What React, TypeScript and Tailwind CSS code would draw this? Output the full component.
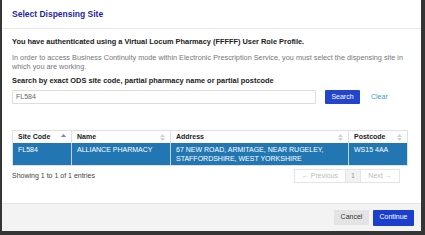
import React from "react";

function SortIcon({ active }: { active?: boolean }) {
  return (
    <svg width="5" height="7" viewBox="0 0 5 7" className="shrink-0">
      <path d="M2.5 0 L5 3 L0 3 Z" fill={active ? "#7777cc" : "#d0d0d0"} />
      {!active && <path d="M2.5 7 L5 4 L0 4 Z" fill="#d0d0d0" />}
    </svg>
  );
}

export default function App() {
  return (
    <div
      className="w-[425px] h-[235px] bg-[#353535] overflow-hidden"
      style={{ fontFamily: '"Liberation Sans", Arial, sans-serif' }}
    >
      <div className="ml-[2px] w-[419px] h-[231px] bg-white flex flex-col">
        <div className="h-[29px] shrink-0 border-b border-[#e8e8e8] flex items-center px-[10px]">
          <span className="text-[8.5px] font-bold text-[#1f1fa8]">Select Dispensing Site</span>
        </div>
        <div className="px-[10px] pt-[8px] flex-1">
          <div className="text-[7.4px] font-bold text-[#222] leading-[10px]">
            You have authenticated using a Virtual Locum Pharmacy (FFFFF) User Role Profile.
          </div>
          <div className="mt-[6px] text-[7.3px] text-[#777] leading-[9px]">
            In order to access Business Continuity mode within Electronic Prescription Service, you must select the dispensing site in which you are working.
          </div>
          <div className="mt-[5px] text-[7.4px] font-bold text-[#222] leading-[10px]">
            Search by exact ODS site code, partial pharmacy name or partial postcode
          </div>
          <div className="mt-[4px] flex items-center">
            <div className="w-[304px] h-[14px] border border-[#dddddd] rounded-[1px] flex items-center px-[3px] text-[7px] text-[#666]">
              FL584
            </div>
            <div className="ml-[9px] w-[35px] h-[14px] bg-[#2345cc] rounded-[1px] flex items-center justify-center text-[7px] text-white">
              Search
            </div>
            <div className="ml-[11px] text-[7px] text-[#3a9ad9]">Clear</div>
          </div>
          <div className="mt-[26px] w-[396px] border border-[#e0e0e0]">
            <div className="flex h-[12px] text-[7px] font-bold text-[#222]">
              <div className="w-[59px] flex items-center justify-between px-[5px] border-r border-[#e0e0e0]">
                <span>Site Code</span>
                <SortIcon active />
              </div>
              <div className="w-[99px] flex items-center justify-between px-[5px] border-r border-[#e0e0e0]">
                <span>Name</span>
                <SortIcon />
              </div>
              <div className="w-[178px] flex items-center justify-between px-[5px] border-r border-[#e0e0e0]">
                <span>Address</span>
                <SortIcon />
              </div>
              <div className="flex-1 flex items-center justify-between px-[5px]">
                <span>Postcode</span>
                <SortIcon />
              </div>
            </div>
            <div className="flex h-[22px] bg-[#2277b2] text-[7px] text-white leading-[9px]">
              <div className="w-[59px] px-[5px] pt-[2px] border-r border-[#bcd4e8]">FL584</div>
              <div className="w-[99px] px-[5px] pt-[2px] border-r border-[#bcd4e8]">ALLIANCE PHARMACY</div>
              <div className="w-[178px] px-[5px] pt-[2px] border-r border-[#bcd4e8]">
                67 NEW ROAD, ARMITAGE, NEAR RUGELEY, STAFFORDSHIRE, WEST YORKSHIRE
              </div>
              <div className="flex-1 px-[5px] pt-[2px]">WS15 4AA</div>
            </div>
          </div>
          <div className="flex items-center justify-between mt-[3px] w-[388px]">
            <span className="text-[7px] text-[#444]">Showing 1 to 1 of 1 entries</span>
            <div className="flex h-[14px] border border-[#e4e4e4] text-[7px] text-[#bbb]">
              <div className="w-[50px] flex items-center justify-center">← Previous</div>
              <div className="w-[16px] flex items-center justify-center bg-[#f2f2f2] text-[#999] border-x border-[#e4e4e4]">1</div>
              <div className="w-[38px] flex items-center justify-center">Next →</div>
            </div>
          </div>
        </div>
        <div className="h-[28px] shrink-0 bg-[#f3f3f3] border-t border-[#e6e6e6] flex items-center justify-end pr-[7px] gap-[4px]">
          <div className="w-[35px] h-[15px] bg-[#e4e4e4] flex items-center justify-center text-[7px] text-[#333] rounded-[1px]">
            Cancel
          </div>
          <div className="w-[41px] h-[16px] bg-[#1a3fcc] flex items-center justify-center text-[7px] text-white rounded-[1px]">
            Continue
          </div>
        </div>
      </div>
    </div>
  );
}
